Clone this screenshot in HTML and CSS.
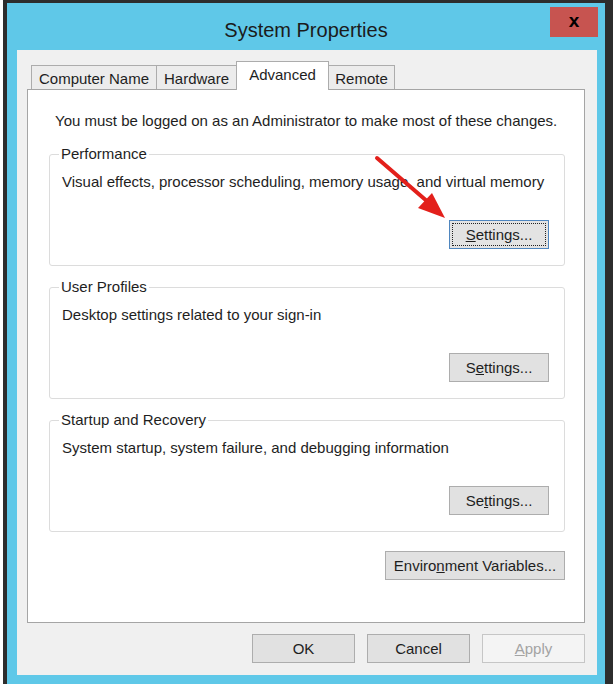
FILE: index.html
```html
<!DOCTYPE html>
<html lang="en">

<head>
    <meta charset="UTF-8">
    <meta name="viewport" content="width=device-width, initial-scale=1.0">
    <title>System Properties</title>
    <link rel="stylesheet" href="styles.css">
</head>

<body>
    <div class="window">
        <div class="titlebar">
            <span class="title">System Properties</span>
            <span class="close">x</span>
        </div>

        <div class="panel">
            <div class="tabs">
                <div class="tab tab-computer">Computer Name</div>
                <div class="tab tab-hardware">Hardware</div>
                <div class="tab tab-advanced active">Advanced</div>
                <div class="tab tab-remote">Remote</div>
            </div>

            <div class="page">
                <p class="note">You must be logged on as an Administrator to make most of these changes.</p>

                <fieldset class="group">
                    <legend>Performance</legend>
                    <p class="desc">Visual effects, processor scheduling, memory usage, and virtual memory</p>
                    <div class="actions">
                        <button class="btn settings focused"><u>S</u>ettings...</button>
                    </div>
                </fieldset>

                <fieldset class="group">
                    <legend>User Profiles</legend>
                    <p class="desc">Desktop settings related to your sign-in</p>
                    <div class="actions">
                        <button class="btn settings">S<u>e</u>ttings...</button>
                    </div>
                </fieldset>

                <fieldset class="group">
                    <legend>Startup and Recovery</legend>
                    <p class="desc">System startup, system failure, and debugging information</p>
                    <div class="actions">
                        <button class="btn settings">Se<u>t</u>tings...</button>
                    </div>
                </fieldset>

                <div class="env-row">
                    <button class="btn env">Enviro<u>n</u>ment Variables...</button>
                </div>

                <!-- red pointer drawn over the first group -->
                <svg class="arrow" viewBox="0 0 90 75">
                    <line x1="9" y1="8" x2="60" y2="52" stroke="#e3201b" stroke-width="4" stroke-linecap="round" />
                    <polygon points="77,68 50,58 64,43" fill="#e3201b" />
                </svg>
            </div>

            <div class="dialog-buttons">
                <button class="btn">OK</button>
                <button class="btn">Cancel</button>
                <button class="btn" disabled><u>A</u>pply</button>
            </div>
        </div>
    </div>
</body>

</html>
```

FILE: styles.css
```css
* {
    box-sizing: border-box;
}

body {
    margin: 0;
    background-color: #fff;
    font-family: "Liberation Sans", Arial, sans-serif;
    font-size: 15px;
    color: #1e1e1e;
}

.window {
    margin-left: 3px;
    width: 610px;
    height: 684px;
    background-color: #5fc8e8;
    border: solid #2d2d2d;
    border-width: 3px 8px 0 4px;
}

.titlebar {
    height: 47px;
    display: grid;
    grid-template-columns: 1fr auto 1fr;
    align-items: start;
}

.title {
    grid-column: 2;
    margin-top: 15px;
    font-size: 20px;
    line-height: 24px;
    color: #1b1b1b;
}

.close {
    grid-column: 3;
    justify-self: end;
    margin-top: 4px;
    margin-right: 7px;
    width: 48px;
    height: 30px;
    background-color: #c75450;
    color: #000;
    font-size: 19px;
    font-weight: bold;
    line-height: 27px;
    text-align: center;
}

.panel {
    margin: 0 8px 0 10px;
    height: 625px;
    background-color: #f0f0f0;
    padding: 14px 12px 0 10px;
}

.tabs {
    display: flex;
    align-items: flex-end;
    height: 25px;
    padding-left: 4px;
}

.tab {
    height: 24px;
    border: 1px solid #acacac;
    border-bottom: none;
    background-color: #ececec;
    text-align: center;
    line-height: 25px;
}

.tab + .tab {
    margin-left: -1px;
}

.tab-computer {
    width: 126px;
}

.tab-hardware {
    width: 81px;
}

.tab-advanced {
    width: 93px;
}

.tab-remote {
    width: 67px;
}

.tab.active {
    position: relative;
    z-index: 1;
    height: 29px;
    margin-bottom: -1px;
    background-color: #fff;
    line-height: 26px;
}

.page {
    position: relative;
    height: 534px;
    background-color: #fff;
    border: 1px solid #a5a5a5;
    padding: 22px 19px 0 21px;
}

.note {
    margin: 0 0 15px 6px;
    line-height: 18px;
}

.group {
    margin: 0 0 12px;
    padding: 10px 15px 16px 12px;
    border: 1px solid #dcdcdc;
    border-radius: 3px;
}

.group legend {
    padding: 0 2px;
    margin-left: -3px;
    line-height: 18px;
}

.desc {
    margin: 0;
    line-height: 18px;
}

.actions {
    display: flex;
    justify-content: flex-end;
    margin-top: 29px;
}

.btn {
    height: 29px;
    width: 103px;
    padding: 0;
    border: 1px solid #adadad;
    background-color: #e1e1e1;
    font-family: inherit;
    font-size: 15px;
    color: #1e1e1e;
}

.btn.settings {
    width: 100px;
}

.btn.focused {
    border-color: #4f86bf;
    background-color: #e3e3e3;
    outline: 1px dotted #222;
    outline-offset: -4px;
}

.btn:disabled {
    background-color: #f4f4f4;
    border-color: #c6c6c6;
    color: #a3a3a3;
}

.env-row {
    display: flex;
    justify-content: flex-end;
    margin-top: 19px;
}

.btn.env {
    width: 180px;
}

.arrow {
    position: absolute;
    left: 340px;
    top: 60px;
    width: 90px;
    height: 75px;
}

.dialog-buttons {
    display: flex;
    justify-content: flex-end;
    gap: 12px;
    margin-top: 11px;
}
```
